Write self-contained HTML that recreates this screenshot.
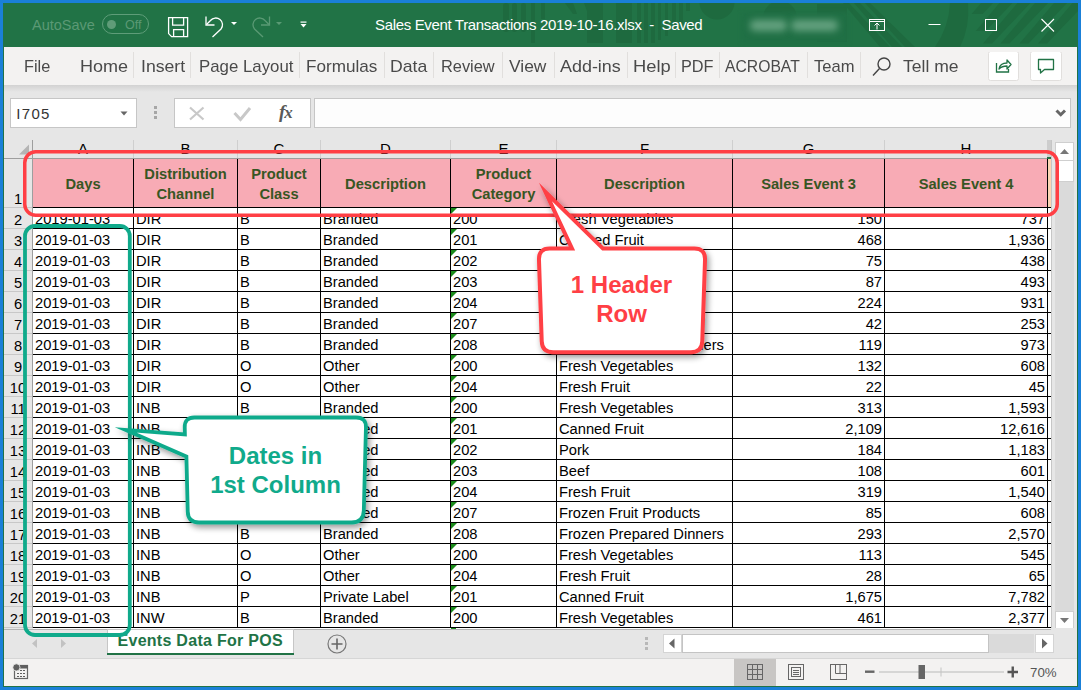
<!DOCTYPE html>
<html><head><meta charset="utf-8"><style>
*{margin:0;padding:0;box-sizing:border-box}
html,body{width:1081px;height:690px;overflow:hidden;background:#1a80d8;font-family:"Liberation Sans",sans-serif}
.a{position:absolute}
.t{position:absolute;white-space:pre;line-height:1}
.cell{position:absolute;white-space:pre;font-size:14.7px;line-height:1;color:#000}
</style></head><body>

<div class="a" style="left:3px;top:3px;width:1075px;height:684px;background:#217346"></div>
<svg class="a" style="left:3px;top:3px" width="1075" height="44" viewBox="3 3 1075 44">
<g fill="#1e6a3f">
<rect x="503" y="3" width="6" height="29" rx="3"/><rect x="512" y="3" width="5" height="29" rx="2.5"/>
<rect x="521" y="3" width="5" height="29" rx="2.5"/><rect x="531" y="3" width="4" height="40"/>
<rect x="541" y="3" width="4" height="16"/><path d="M565 3 h8 l4 11 h-4z"/>
<path d="M584 3 h19 v40 h-16 v-32z"/><rect x="616" y="3" width="16" height="40"/>
<rect x="637" y="3" width="4" height="40"/><rect x="644" y="3" width="4" height="40"/>
<rect x="651" y="3" width="4" height="40"/><rect x="658" y="3" width="3" height="37"/>
<rect x="665" y="3" width="3" height="33"/><rect x="672" y="3" width="4" height="26"/>
<rect x="679" y="3" width="4" height="20"/><rect x="686" y="3" width="4" height="8"/>
<circle cx="717" cy="2" r="17.5"/>
<circle cx="780" cy="18" r="17"/>
<rect x="817" y="4" width="30" height="38"/>
<path d="M843 3 h6 l41 44 h-10z M854 3 h6 l42 44 h-10z M865 3 h5 l45 44 h-10z"/>
<path d="M950 3 h18 q2 24 -8 44 h-25 q14 -20 15 -44z"/>
<path d="M981.0 3 H993.0 L982.6 14 H971.6Z M999.5 3 H1012.5 L985.8 31 H975.8Z M1017.5 3 H1030.5 L992.0 43.5 H983.0Z M1035.0 3 H1048.0 L1009.5 43.5 H1000.5Z M1054.0 3 H1067.0 L1028.5 43.5 H1019.5Z M1072.5 3 H1085.5 L1047.0 43.5 H1038.0Z"/>
</g>
</svg>
<div class="t" style="left:32px;top:17.5px;font-size:14.5px;color:#5b9975">AutoSave</div>
<div class="a" style="left:102px;top:14px;width:47px;height:20px;border:1px solid #5e9d79;border-radius:10px"></div>
<div class="a" style="left:107px;top:19.5px;width:9px;height:9px;border-radius:50%;background:#5f9c78"></div>
<div class="t" style="left:125px;top:19px;font-size:12.5px;color:#5b9975">Off</div>
<svg class="a" style="left:160px;top:10px" width="160" height="32" viewBox="160 10 160 32">
<g fill="none" stroke="#fff" stroke-width="1.3">
<path d="M168.6 17.6 h19 v19 h-16 l-3 -3z"/>
<path d="M172.6 17.6 v7.5 h11 v-7.5"/>
<path d="M173.6 36.6 v-7 h10 v7"/>
<path d="M206 16.5 v8.5 h8.5"/>
<path d="M206.5 24.5 l4 -4 a6.5 6.5 0 0 1 10.5 8.5 l-8.5 8"/>
</g>
<path d="M231 22 h6 l-3 3z" fill="#fff"/>
<g fill="none" stroke="#5a9a74" stroke-width="1.3">
<path d="M269.5 16.5 v8.5 h-8.5"/>
<path d="M269 24.5 l-4 -4 a6.5 6.5 0 0 0 -10.5 8.5 l8.5 8"/>
</g>
<path d="M276 22 h6 l-3 3z" fill="#5a9a74"/>
<rect x="300.5" y="21.5" width="6" height="1.2" fill="#fff"/>
<path d="M300.5 24 h6 l-3 3.5z" fill="#fff"/>
</svg>
<div class="t" style="left:375px;top:17px;font-size:15px;letter-spacing:-0.34px;color:#fff">Sales Event Transactions 2019-10-16.xlsx  -  Saved</div>
<div class="a" style="left:742px;top:12px;width:106px;height:31px;background:#207045;filter:blur(2px)"></div>
<div class="a" style="left:750px;top:20px;width:37px;height:11px;border-radius:5px;background:#64a17f;filter:blur(3.5px)"></div>
<div class="a" style="left:791px;top:20px;width:47px;height:11px;border-radius:5px;background:#64a17f;filter:blur(3.5px)"></div>
<svg class="a" style="left:860px;top:10px" width="210" height="30" viewBox="860 10 210 30">
<g fill="none" stroke="#fff" stroke-width="1">
<rect x="869.5" y="19.5" width="15" height="11"/>
<path d="M870 21.5 h14"/>
<path d="M877 29.5 v-6.5 M874.5 25.5 l2.5 -2.5 l2.5 2.5"/>
<path d="M928.5 24.5 h12"/>
<rect x="985.5" y="19.5" width="11" height="11"/>
<path d="M1041.5 19 l12.5 12.5 M1054 19 l-12.5 12.5" stroke-width="1.1"/>
</g></svg>
<div class="a" style="left:4px;top:47px;width:1073px;height:38px;background:#f3f2f1"></div>
<div class="t" style="left:24px;top:58px;font-size:17px;color:#4a4a4a;transform:scaleX(0.96);transform-origin:0 0">File</div>
<div class="t" style="left:79.5px;top:58px;font-size:17px;color:#4a4a4a;transform:scaleX(1.06);transform-origin:0 0">Home</div>
<div class="t" style="left:140.5px;top:58px;font-size:17px;color:#4a4a4a;transform:scaleX(1.038);transform-origin:0 0">Insert</div>
<div class="t" style="left:198.5px;top:58px;font-size:17px;color:#4a4a4a;transform:scaleX(0.989);transform-origin:0 0">Page Layout</div>
<div class="t" style="left:306px;top:58px;font-size:17px;color:#4a4a4a;transform:scaleX(1.007);transform-origin:0 0">Formulas</div>
<div class="t" style="left:390px;top:58px;font-size:17px;color:#4a4a4a;transform:scaleX(1.038);transform-origin:0 0">Data</div>
<div class="t" style="left:441px;top:58px;font-size:17px;color:#4a4a4a;transform:scaleX(0.963);transform-origin:0 0">Review</div>
<div class="t" style="left:509px;top:58px;font-size:17px;color:#4a4a4a;transform:scaleX(1.023);transform-origin:0 0">View</div>
<div class="t" style="left:560px;top:58px;font-size:17px;color:#4a4a4a;transform:scaleX(1.054);transform-origin:0 0">Add-ins</div>
<div class="t" style="left:632.5px;top:58px;font-size:17px;color:#4a4a4a;transform:scaleX(1.078);transform-origin:0 0">Help</div>
<div class="t" style="left:681.3px;top:58px;font-size:17px;color:#4a4a4a;transform:scaleX(0.958);transform-origin:0 0">PDF</div>
<div class="t" style="left:725.4px;top:58px;font-size:17px;color:#4a4a4a;transform:scaleX(0.924);transform-origin:0 0">ACROBAT</div>
<div class="t" style="left:813.6px;top:58px;font-size:17px;color:#4a4a4a;transform:scaleX(0.974);transform-origin:0 0">Team</div>
<div class="t" style="left:902.7px;top:58px;font-size:17px;color:#4a4a4a;transform:scaleX(1.031);transform-origin:0 0">Tell me</div>
<div class="a" style="left:133px;top:52px;width:1px;height:26px;background:#e1dfdd"></div>
<div class="a" style="left:190px;top:52px;width:1px;height:26px;background:#e1dfdd"></div>
<div class="a" style="left:299px;top:52px;width:1px;height:26px;background:#e1dfdd"></div>
<div class="a" style="left:384px;top:52px;width:1px;height:26px;background:#e1dfdd"></div>
<div class="a" style="left:433px;top:52px;width:1px;height:26px;background:#e1dfdd"></div>
<div class="a" style="left:502px;top:52px;width:1px;height:26px;background:#e1dfdd"></div>
<div class="a" style="left:554px;top:52px;width:1px;height:26px;background:#e1dfdd"></div>
<div class="a" style="left:627px;top:52px;width:1px;height:26px;background:#e1dfdd"></div>
<div class="a" style="left:675px;top:52px;width:1px;height:26px;background:#e1dfdd"></div>
<div class="a" style="left:719px;top:52px;width:1px;height:26px;background:#e1dfdd"></div>
<div class="a" style="left:807px;top:52px;width:1px;height:26px;background:#e1dfdd"></div>
<div class="a" style="left:860px;top:52px;width:1px;height:26px;background:#e1dfdd"></div>
<svg class="a" style="left:868px;top:52px" width="200" height="32" viewBox="868 52 200 32">
<g fill="none" stroke="#444" stroke-width="1.4"><circle cx="884" cy="64" r="6"/><path d="M879.5 68.5 l-6.5 7"/></g>
<rect x="988.5" y="51.5" width="30" height="29" rx="2" fill="#fff" stroke="#e1dfdd"/>
<rect x="1030.5" y="51.5" width="31" height="29" rx="2" fill="#fff" stroke="#e1dfdd"/>
<g fill="none" stroke="#217346" stroke-width="1.3">
<path d="M996.5 63 v9 h12 v-3"/><path d="M999 69 q1 -6 8 -6 v-3 l4 4.5 l-4 4.5 v-3 q-5 0 -8 3z" stroke-linejoin="round"/>
<path d="M1038.5 59.5 h15 v10 h-9 l-4 3.5 v-3.5 h-2z" stroke-linejoin="round"/>
</g></svg>
<div class="a" style="left:4px;top:85px;width:1073px;height:573px;background:#e6e6e6"></div>
<div class="a" style="left:4px;top:85px;width:1073px;height:7px;background:linear-gradient(#d2d2d2,#e6e6e6)"></div>
<div class="a" style="left:10px;top:98px;width:127px;height:30px;background:#fff;border:1px solid #c6c6c6"></div>
<div class="t" style="left:16.3px;top:105.5px;font-size:15px;letter-spacing:1.3px;color:#333">I705</div>
<svg class="a" style="left:110px;top:95px" width="210" height="35" viewBox="110 95 210 35">
<path d="M120.5 111.5 h7 l-3.5 4z" fill="#666"/>
<g fill="#a6a6a6"><rect x="154" y="106" width="3" height="3"/><rect x="154" y="111" width="3" height="3"/><rect x="154" y="116" width="3" height="3"/></g>
<rect x="174.5" y="98.5" width="136" height="29" fill="#fff" stroke="#c6c6c6"/>
<g fill="none" stroke="#c8c8c8" stroke-width="2.2"><path d="M190 107.5 l13.5 12 M203.5 107.5 l-13.5 12"/><path d="M234.5 113 l6 6.5 l9.5 -11.5" stroke-width="3"/></g>
</svg>
<div class="t" style="left:279px;top:102px;font-size:19px;font-family:'Liberation Serif',serif;font-style:italic;font-weight:bold;color:#595959">f<span style="font-size:17px;margin-left:-1px">x</span></div>
<div class="a" style="left:314px;top:98px;width:757px;height:30px;background:#fdfdfd;border:1px solid #c6c6c6"></div>
<svg class="a" style="left:1050px;top:105px" width="20" height="15" viewBox="1050 105 20 15"><path d="M1056.5 110.5 l4.25 4.25 l4.25 -4.25" fill="none" stroke="#666" stroke-width="3"/></svg>
<div class="a" style="left:4px;top:140px;width:1047px;height:18px;background:#e6e6e6"></div>
<div class="a" style="left:4px;top:158px;width:1047px;height:1px;background:#9e9e9e"></div>
<svg class="a" style="left:15px;top:142px" width="16" height="16" viewBox="15 142 16 16"><path d="M29 144.5 v10 h-10z" fill="#b4b4b4"/></svg>
<div class="a" style="left:32px;top:140px;width:1px;height:18px;background:#cfcfcf"></div>
<div class="a" style="left:133px;top:140px;width:1px;height:18px;background:#cfcfcf"></div>
<div class="a" style="left:237px;top:140px;width:1px;height:18px;background:#cfcfcf"></div>
<div class="a" style="left:320px;top:140px;width:1px;height:18px;background:#cfcfcf"></div>
<div class="a" style="left:450px;top:140px;width:1px;height:18px;background:#cfcfcf"></div>
<div class="a" style="left:556px;top:140px;width:1px;height:18px;background:#cfcfcf"></div>
<div class="a" style="left:732px;top:140px;width:1px;height:18px;background:#cfcfcf"></div>
<div class="a" style="left:884px;top:140px;width:1px;height:18px;background:#cfcfcf"></div>
<div class="a" style="left:1047px;top:140px;width:1px;height:18px;background:#cfcfcf"></div>
<div class="a" style="left:1047px;top:140px;width:4px;height:18px;background:#cdcdcd"></div>
<div class="t" style="left:33px;width:100px;top:141px;font-size:15px;text-align:center;color:#000">A</div>
<div class="t" style="left:134px;width:103px;top:141px;font-size:15px;text-align:center;color:#000">B</div>
<div class="t" style="left:238px;width:82px;top:141px;font-size:15px;text-align:center;color:#000">C</div>
<div class="t" style="left:321px;width:129px;top:141px;font-size:15px;text-align:center;color:#000">D</div>
<div class="t" style="left:451px;width:105px;top:141px;font-size:15px;text-align:center;color:#000">E</div>
<div class="t" style="left:557px;width:175px;top:141px;font-size:15px;text-align:center;color:#000">F</div>
<div class="t" style="left:733px;width:151px;top:141px;font-size:15px;text-align:center;color:#000">G</div>
<div class="t" style="left:885px;width:162px;top:141px;font-size:15px;text-align:center;color:#000">H</div>
<div class="a" style="left:4px;top:159px;width:28px;height:469px;background:#e6e6e6"></div>
<div class="a" style="left:32px;top:140px;width:1px;height:488px;background:#9e9e9e"></div>
<div class="a" style="left:4px;top:207px;width:28px;height:1px;background:#c8c8c8"></div>
<div class="t" style="left:4px;width:28px;top:191.5px;font-size:14.7px;text-align:center;color:#000">1</div>
<div class="a" style="left:4px;top:228px;width:28px;height:1px;background:#c8c8c8"></div>
<div class="t" style="left:4px;width:28px;top:212.5px;font-size:14.7px;text-align:center;color:#000">2</div>
<div class="a" style="left:4px;top:249px;width:28px;height:1px;background:#c8c8c8"></div>
<div class="t" style="left:4px;width:28px;top:233.5px;font-size:14.7px;text-align:center;color:#000">3</div>
<div class="a" style="left:4px;top:270px;width:28px;height:1px;background:#c8c8c8"></div>
<div class="t" style="left:4px;width:28px;top:254.5px;font-size:14.7px;text-align:center;color:#000">4</div>
<div class="a" style="left:4px;top:291px;width:28px;height:1px;background:#c8c8c8"></div>
<div class="t" style="left:4px;width:28px;top:275.5px;font-size:14.7px;text-align:center;color:#000">5</div>
<div class="a" style="left:4px;top:312px;width:28px;height:1px;background:#c8c8c8"></div>
<div class="t" style="left:4px;width:28px;top:296.5px;font-size:14.7px;text-align:center;color:#000">6</div>
<div class="a" style="left:4px;top:333px;width:28px;height:1px;background:#c8c8c8"></div>
<div class="t" style="left:4px;width:28px;top:317.5px;font-size:14.7px;text-align:center;color:#000">7</div>
<div class="a" style="left:4px;top:354px;width:28px;height:1px;background:#c8c8c8"></div>
<div class="t" style="left:4px;width:28px;top:338.5px;font-size:14.7px;text-align:center;color:#000">8</div>
<div class="a" style="left:4px;top:375px;width:28px;height:1px;background:#c8c8c8"></div>
<div class="t" style="left:4px;width:28px;top:359.5px;font-size:14.7px;text-align:center;color:#000">9</div>
<div class="a" style="left:4px;top:396px;width:28px;height:1px;background:#c8c8c8"></div>
<div class="t" style="left:4px;width:28px;top:380.5px;font-size:14.7px;text-align:center;color:#000">10</div>
<div class="a" style="left:4px;top:417px;width:28px;height:1px;background:#c8c8c8"></div>
<div class="t" style="left:4px;width:28px;top:401.5px;font-size:14.7px;text-align:center;color:#000">11</div>
<div class="a" style="left:4px;top:438px;width:28px;height:1px;background:#c8c8c8"></div>
<div class="t" style="left:4px;width:28px;top:422.5px;font-size:14.7px;text-align:center;color:#000">12</div>
<div class="a" style="left:4px;top:459px;width:28px;height:1px;background:#c8c8c8"></div>
<div class="t" style="left:4px;width:28px;top:443.5px;font-size:14.7px;text-align:center;color:#000">13</div>
<div class="a" style="left:4px;top:480px;width:28px;height:1px;background:#c8c8c8"></div>
<div class="t" style="left:4px;width:28px;top:464.5px;font-size:14.7px;text-align:center;color:#000">14</div>
<div class="a" style="left:4px;top:501px;width:28px;height:1px;background:#c8c8c8"></div>
<div class="t" style="left:4px;width:28px;top:485.5px;font-size:14.7px;text-align:center;color:#000">15</div>
<div class="a" style="left:4px;top:522px;width:28px;height:1px;background:#c8c8c8"></div>
<div class="t" style="left:4px;width:28px;top:506.5px;font-size:14.7px;text-align:center;color:#000">16</div>
<div class="a" style="left:4px;top:543px;width:28px;height:1px;background:#c8c8c8"></div>
<div class="t" style="left:4px;width:28px;top:527.5px;font-size:14.7px;text-align:center;color:#000">17</div>
<div class="a" style="left:4px;top:564px;width:28px;height:1px;background:#c8c8c8"></div>
<div class="t" style="left:4px;width:28px;top:548.5px;font-size:14.7px;text-align:center;color:#000">18</div>
<div class="a" style="left:4px;top:585px;width:28px;height:1px;background:#c8c8c8"></div>
<div class="t" style="left:4px;width:28px;top:569.5px;font-size:14.7px;text-align:center;color:#000">19</div>
<div class="a" style="left:4px;top:606px;width:28px;height:1px;background:#c8c8c8"></div>
<div class="t" style="left:4px;width:28px;top:590.5px;font-size:14.7px;text-align:center;color:#000">20</div>
<div class="a" style="left:4px;top:627px;width:28px;height:1px;background:#c8c8c8"></div>
<div class="t" style="left:4px;width:28px;top:611.5px;font-size:14.7px;text-align:center;color:#000">21</div>
<div class="a" style="left:33px;top:159px;width:1018px;height:469px;background:#fff"></div>
<div class="a" style="left:33px;top:159px;width:1014px;height:48px;background:#f8abb5"></div>
<div class="a" style="left:1048px;top:159px;width:3px;height:48px;background:#fcd5b4"></div>
<div class="a" style="left:1047px;top:157px;width:4px;height:2px;background:#217346"></div>
<div class="a" style="left:33px;top:207px;width:1018px;height:1px;background:#000"></div>
<div class="a" style="left:33px;top:228px;width:1018px;height:1px;background:#000"></div>
<div class="a" style="left:33px;top:249px;width:1018px;height:1px;background:#000"></div>
<div class="a" style="left:33px;top:270px;width:1018px;height:1px;background:#000"></div>
<div class="a" style="left:33px;top:291px;width:1018px;height:1px;background:#000"></div>
<div class="a" style="left:33px;top:312px;width:1018px;height:1px;background:#000"></div>
<div class="a" style="left:33px;top:333px;width:1018px;height:1px;background:#000"></div>
<div class="a" style="left:33px;top:354px;width:1018px;height:1px;background:#000"></div>
<div class="a" style="left:33px;top:375px;width:1018px;height:1px;background:#000"></div>
<div class="a" style="left:33px;top:396px;width:1018px;height:1px;background:#000"></div>
<div class="a" style="left:33px;top:417px;width:1018px;height:1px;background:#000"></div>
<div class="a" style="left:33px;top:438px;width:1018px;height:1px;background:#000"></div>
<div class="a" style="left:33px;top:459px;width:1018px;height:1px;background:#000"></div>
<div class="a" style="left:33px;top:480px;width:1018px;height:1px;background:#000"></div>
<div class="a" style="left:33px;top:501px;width:1018px;height:1px;background:#000"></div>
<div class="a" style="left:33px;top:522px;width:1018px;height:1px;background:#000"></div>
<div class="a" style="left:33px;top:543px;width:1018px;height:1px;background:#000"></div>
<div class="a" style="left:33px;top:564px;width:1018px;height:1px;background:#000"></div>
<div class="a" style="left:33px;top:585px;width:1018px;height:1px;background:#000"></div>
<div class="a" style="left:33px;top:606px;width:1018px;height:1px;background:#000"></div>
<div class="a" style="left:33px;top:627px;width:1018px;height:1px;background:#000"></div>
<div class="a" style="left:133px;top:159px;width:1px;height:469px;background:#000"></div>
<div class="a" style="left:237px;top:159px;width:1px;height:469px;background:#000"></div>
<div class="a" style="left:320px;top:159px;width:1px;height:469px;background:#000"></div>
<div class="a" style="left:450px;top:159px;width:1px;height:469px;background:#000"></div>
<div class="a" style="left:556px;top:159px;width:1px;height:469px;background:#000"></div>
<div class="a" style="left:732px;top:159px;width:1px;height:469px;background:#000"></div>
<div class="a" style="left:884px;top:159px;width:1px;height:469px;background:#000"></div>
<div class="a" style="left:1047px;top:159px;width:1px;height:469px;background:#000"></div>
<div class="t" style="left:33px;width:100px;top:177px;font-size:14.7px;line-height:20px;margin-top:-3px;font-weight:bold;text-align:center;color:#375623">Days</div>
<div class="t" style="left:134px;width:103px;top:167px;font-size:14.7px;line-height:20px;margin-top:-3px;font-weight:bold;text-align:center;color:#375623">Distribution<br>Channel</div>
<div class="t" style="left:238px;width:82px;top:167px;font-size:14.7px;line-height:20px;margin-top:-3px;font-weight:bold;text-align:center;color:#375623">Product<br>Class</div>
<div class="t" style="left:321px;width:129px;top:177px;font-size:14.7px;line-height:20px;margin-top:-3px;font-weight:bold;text-align:center;color:#375623">Description</div>
<div class="t" style="left:451px;width:105px;top:167px;font-size:14.7px;line-height:20px;margin-top:-3px;font-weight:bold;text-align:center;color:#375623">Product<br>Category</div>
<div class="t" style="left:557px;width:175px;top:177px;font-size:14.7px;line-height:20px;margin-top:-3px;font-weight:bold;text-align:center;color:#375623">Description</div>
<div class="t" style="left:733px;width:151px;top:177px;font-size:14.7px;line-height:20px;margin-top:-3px;font-weight:bold;text-align:center;color:#375623">Sales Event 3</div>
<div class="t" style="left:885px;width:162px;top:177px;font-size:14.7px;line-height:20px;margin-top:-3px;font-weight:bold;text-align:center;color:#375623">Sales Event 4</div>
<div class="cell" style="left:35px;top:212px">2019-01-03</div>
<div class="cell" style="left:136px;top:212px">DIR</div>
<div class="cell" style="left:240px;top:212px">B</div>
<div class="cell" style="left:323px;top:212px">Branded</div>
<div class="cell" style="left:453px;top:212px">200</div>
<div class="cell" style="left:559px;top:212px">Fresh Vegetables</div>
<div class="cell" style="right:199px;top:212px">150</div>
<div class="cell" style="right:36px;top:212px">737</div>
<svg class="a" style="left:451px;top:208px" width="6" height="6"><path d="M0 0 h6 l-6 6z" fill="#1a8a1a"/></svg>
<div class="cell" style="left:35px;top:233px">2019-01-03</div>
<div class="cell" style="left:136px;top:233px">DIR</div>
<div class="cell" style="left:240px;top:233px">B</div>
<div class="cell" style="left:323px;top:233px">Branded</div>
<div class="cell" style="left:453px;top:233px">201</div>
<div class="cell" style="left:559px;top:233px">Canned Fruit</div>
<div class="cell" style="right:199px;top:233px">468</div>
<div class="cell" style="right:36px;top:233px">1,936</div>
<svg class="a" style="left:451px;top:229px" width="6" height="6"><path d="M0 0 h6 l-6 6z" fill="#1a8a1a"/></svg>
<div class="cell" style="left:35px;top:254px">2019-01-03</div>
<div class="cell" style="left:136px;top:254px">DIR</div>
<div class="cell" style="left:240px;top:254px">B</div>
<div class="cell" style="left:323px;top:254px">Branded</div>
<div class="cell" style="left:453px;top:254px">202</div>
<div class="cell" style="left:559px;top:254px">Pork</div>
<div class="cell" style="right:199px;top:254px">75</div>
<div class="cell" style="right:36px;top:254px">438</div>
<svg class="a" style="left:451px;top:250px" width="6" height="6"><path d="M0 0 h6 l-6 6z" fill="#1a8a1a"/></svg>
<div class="cell" style="left:35px;top:275px">2019-01-03</div>
<div class="cell" style="left:136px;top:275px">DIR</div>
<div class="cell" style="left:240px;top:275px">B</div>
<div class="cell" style="left:323px;top:275px">Branded</div>
<div class="cell" style="left:453px;top:275px">203</div>
<div class="cell" style="left:559px;top:275px">Beef</div>
<div class="cell" style="right:199px;top:275px">87</div>
<div class="cell" style="right:36px;top:275px">493</div>
<svg class="a" style="left:451px;top:271px" width="6" height="6"><path d="M0 0 h6 l-6 6z" fill="#1a8a1a"/></svg>
<div class="cell" style="left:35px;top:296px">2019-01-03</div>
<div class="cell" style="left:136px;top:296px">DIR</div>
<div class="cell" style="left:240px;top:296px">B</div>
<div class="cell" style="left:323px;top:296px">Branded</div>
<div class="cell" style="left:453px;top:296px">204</div>
<div class="cell" style="left:559px;top:296px">Fresh Fruit</div>
<div class="cell" style="right:199px;top:296px">224</div>
<div class="cell" style="right:36px;top:296px">931</div>
<svg class="a" style="left:451px;top:292px" width="6" height="6"><path d="M0 0 h6 l-6 6z" fill="#1a8a1a"/></svg>
<div class="cell" style="left:35px;top:317px">2019-01-03</div>
<div class="cell" style="left:136px;top:317px">DIR</div>
<div class="cell" style="left:240px;top:317px">B</div>
<div class="cell" style="left:323px;top:317px">Branded</div>
<div class="cell" style="left:453px;top:317px">207</div>
<div class="cell" style="left:559px;top:317px">Frozen Fruit Products</div>
<div class="cell" style="right:199px;top:317px">42</div>
<div class="cell" style="right:36px;top:317px">253</div>
<svg class="a" style="left:451px;top:313px" width="6" height="6"><path d="M0 0 h6 l-6 6z" fill="#1a8a1a"/></svg>
<div class="cell" style="left:35px;top:338px">2019-01-03</div>
<div class="cell" style="left:136px;top:338px">DIR</div>
<div class="cell" style="left:240px;top:338px">B</div>
<div class="cell" style="left:323px;top:338px">Branded</div>
<div class="cell" style="left:453px;top:338px">208</div>
<div class="cell" style="left:559px;top:338px">Frozen Prepared Dinners</div>
<div class="cell" style="right:199px;top:338px">119</div>
<div class="cell" style="right:36px;top:338px">973</div>
<svg class="a" style="left:451px;top:334px" width="6" height="6"><path d="M0 0 h6 l-6 6z" fill="#1a8a1a"/></svg>
<div class="cell" style="left:35px;top:359px">2019-01-03</div>
<div class="cell" style="left:136px;top:359px">DIR</div>
<div class="cell" style="left:240px;top:359px">O</div>
<div class="cell" style="left:323px;top:359px">Other</div>
<div class="cell" style="left:453px;top:359px">200</div>
<div class="cell" style="left:559px;top:359px">Fresh Vegetables</div>
<div class="cell" style="right:199px;top:359px">132</div>
<div class="cell" style="right:36px;top:359px">608</div>
<svg class="a" style="left:451px;top:355px" width="6" height="6"><path d="M0 0 h6 l-6 6z" fill="#1a8a1a"/></svg>
<div class="cell" style="left:35px;top:380px">2019-01-03</div>
<div class="cell" style="left:136px;top:380px">DIR</div>
<div class="cell" style="left:240px;top:380px">O</div>
<div class="cell" style="left:323px;top:380px">Other</div>
<div class="cell" style="left:453px;top:380px">204</div>
<div class="cell" style="left:559px;top:380px">Fresh Fruit</div>
<div class="cell" style="right:199px;top:380px">22</div>
<div class="cell" style="right:36px;top:380px">45</div>
<svg class="a" style="left:451px;top:376px" width="6" height="6"><path d="M0 0 h6 l-6 6z" fill="#1a8a1a"/></svg>
<div class="cell" style="left:35px;top:401px">2019-01-03</div>
<div class="cell" style="left:136px;top:401px">INB</div>
<div class="cell" style="left:240px;top:401px">B</div>
<div class="cell" style="left:323px;top:401px">Branded</div>
<div class="cell" style="left:453px;top:401px">200</div>
<div class="cell" style="left:559px;top:401px">Fresh Vegetables</div>
<div class="cell" style="right:199px;top:401px">313</div>
<div class="cell" style="right:36px;top:401px">1,593</div>
<svg class="a" style="left:451px;top:397px" width="6" height="6"><path d="M0 0 h6 l-6 6z" fill="#1a8a1a"/></svg>
<div class="cell" style="left:35px;top:422px">2019-01-03</div>
<div class="cell" style="left:136px;top:422px">INB</div>
<div class="cell" style="left:240px;top:422px">B</div>
<div class="cell" style="left:323px;top:422px">Branded</div>
<div class="cell" style="left:453px;top:422px">201</div>
<div class="cell" style="left:559px;top:422px">Canned Fruit</div>
<div class="cell" style="right:199px;top:422px">2,109</div>
<div class="cell" style="right:36px;top:422px">12,616</div>
<svg class="a" style="left:451px;top:418px" width="6" height="6"><path d="M0 0 h6 l-6 6z" fill="#1a8a1a"/></svg>
<div class="cell" style="left:35px;top:443px">2019-01-03</div>
<div class="cell" style="left:136px;top:443px">INB</div>
<div class="cell" style="left:240px;top:443px">B</div>
<div class="cell" style="left:323px;top:443px">Branded</div>
<div class="cell" style="left:453px;top:443px">202</div>
<div class="cell" style="left:559px;top:443px">Pork</div>
<div class="cell" style="right:199px;top:443px">184</div>
<div class="cell" style="right:36px;top:443px">1,183</div>
<svg class="a" style="left:451px;top:439px" width="6" height="6"><path d="M0 0 h6 l-6 6z" fill="#1a8a1a"/></svg>
<div class="cell" style="left:35px;top:464px">2019-01-03</div>
<div class="cell" style="left:136px;top:464px">INB</div>
<div class="cell" style="left:240px;top:464px">B</div>
<div class="cell" style="left:323px;top:464px">Branded</div>
<div class="cell" style="left:453px;top:464px">203</div>
<div class="cell" style="left:559px;top:464px">Beef</div>
<div class="cell" style="right:199px;top:464px">108</div>
<div class="cell" style="right:36px;top:464px">601</div>
<svg class="a" style="left:451px;top:460px" width="6" height="6"><path d="M0 0 h6 l-6 6z" fill="#1a8a1a"/></svg>
<div class="cell" style="left:35px;top:485px">2019-01-03</div>
<div class="cell" style="left:136px;top:485px">INB</div>
<div class="cell" style="left:240px;top:485px">B</div>
<div class="cell" style="left:323px;top:485px">Branded</div>
<div class="cell" style="left:453px;top:485px">204</div>
<div class="cell" style="left:559px;top:485px">Fresh Fruit</div>
<div class="cell" style="right:199px;top:485px">319</div>
<div class="cell" style="right:36px;top:485px">1,540</div>
<svg class="a" style="left:451px;top:481px" width="6" height="6"><path d="M0 0 h6 l-6 6z" fill="#1a8a1a"/></svg>
<div class="cell" style="left:35px;top:506px">2019-01-03</div>
<div class="cell" style="left:136px;top:506px">INB</div>
<div class="cell" style="left:240px;top:506px">B</div>
<div class="cell" style="left:323px;top:506px">Branded</div>
<div class="cell" style="left:453px;top:506px">207</div>
<div class="cell" style="left:559px;top:506px">Frozen Fruit Products</div>
<div class="cell" style="right:199px;top:506px">85</div>
<div class="cell" style="right:36px;top:506px">608</div>
<svg class="a" style="left:451px;top:502px" width="6" height="6"><path d="M0 0 h6 l-6 6z" fill="#1a8a1a"/></svg>
<div class="cell" style="left:35px;top:527px">2019-01-03</div>
<div class="cell" style="left:136px;top:527px">INB</div>
<div class="cell" style="left:240px;top:527px">B</div>
<div class="cell" style="left:323px;top:527px">Branded</div>
<div class="cell" style="left:453px;top:527px">208</div>
<div class="cell" style="left:559px;top:527px">Frozen Prepared Dinners</div>
<div class="cell" style="right:199px;top:527px">293</div>
<div class="cell" style="right:36px;top:527px">2,570</div>
<svg class="a" style="left:451px;top:523px" width="6" height="6"><path d="M0 0 h6 l-6 6z" fill="#1a8a1a"/></svg>
<div class="cell" style="left:35px;top:548px">2019-01-03</div>
<div class="cell" style="left:136px;top:548px">INB</div>
<div class="cell" style="left:240px;top:548px">O</div>
<div class="cell" style="left:323px;top:548px">Other</div>
<div class="cell" style="left:453px;top:548px">200</div>
<div class="cell" style="left:559px;top:548px">Fresh Vegetables</div>
<div class="cell" style="right:199px;top:548px">113</div>
<div class="cell" style="right:36px;top:548px">545</div>
<svg class="a" style="left:451px;top:544px" width="6" height="6"><path d="M0 0 h6 l-6 6z" fill="#1a8a1a"/></svg>
<div class="cell" style="left:35px;top:569px">2019-01-03</div>
<div class="cell" style="left:136px;top:569px">INB</div>
<div class="cell" style="left:240px;top:569px">O</div>
<div class="cell" style="left:323px;top:569px">Other</div>
<div class="cell" style="left:453px;top:569px">204</div>
<div class="cell" style="left:559px;top:569px">Fresh Fruit</div>
<div class="cell" style="right:199px;top:569px">28</div>
<div class="cell" style="right:36px;top:569px">65</div>
<svg class="a" style="left:451px;top:565px" width="6" height="6"><path d="M0 0 h6 l-6 6z" fill="#1a8a1a"/></svg>
<div class="cell" style="left:35px;top:590px">2019-01-03</div>
<div class="cell" style="left:136px;top:590px">INB</div>
<div class="cell" style="left:240px;top:590px">P</div>
<div class="cell" style="left:323px;top:590px">Private Label</div>
<div class="cell" style="left:453px;top:590px">201</div>
<div class="cell" style="left:559px;top:590px">Canned Fruit</div>
<div class="cell" style="right:199px;top:590px">1,675</div>
<div class="cell" style="right:36px;top:590px">7,782</div>
<svg class="a" style="left:451px;top:586px" width="6" height="6"><path d="M0 0 h6 l-6 6z" fill="#1a8a1a"/></svg>
<div class="cell" style="left:35px;top:611px">2019-01-03</div>
<div class="cell" style="left:136px;top:611px">INW</div>
<div class="cell" style="left:240px;top:611px">B</div>
<div class="cell" style="left:323px;top:611px">Branded</div>
<div class="cell" style="left:453px;top:611px">200</div>
<div class="cell" style="left:559px;top:611px">Fresh Vegetables</div>
<div class="cell" style="right:199px;top:611px">461</div>
<div class="cell" style="right:36px;top:611px">2,377</div>
<svg class="a" style="left:451px;top:607px" width="6" height="6"><path d="M0 0 h6 l-6 6z" fill="#1a8a1a"/></svg>
<div class="a" style="left:1051px;top:140px;width:1px;height:488px;background:#c6c6c6"></div>
<div class="a" style="left:1052px;top:140px;width:25px;height:488px;background:#e6e6e6"></div>
<div class="a" style="left:1055px;top:142px;width:19px;height:19px;background:#fff;border:1px solid #cfcfcf"></div>
<div class="a" style="left:1055px;top:160px;width:19px;height:22px;background:#fff;border:1px solid #cfcfcf"></div>
<div class="a" style="left:1055px;top:182px;width:19px;height:429px;background:#dadada"></div>
<div class="a" style="left:1055px;top:611px;width:19px;height:19px;background:#fff;border:1px solid #cfcfcf"></div>
<svg class="a" style="left:1055px;top:140px" width="20" height="490" viewBox="1055 140 20 490"><path d="M1060 154 h9 l-4.5 -5z" fill="#777"/><path d="M1060 618 h9 l-4.5 5z" fill="#777"/></svg>
<div class="a" style="left:4px;top:628px;width:1073px;height:30px;background:#e6e6e6"></div>
<div class="a" style="left:33px;top:628px;width:1018px;height:1px;background:#fff"></div>
<div class="a" style="left:451px;top:628px;width:5px;height:1px;background:#1a8a1a"></div>
<div class="a" style="left:4px;top:629px;width:1047px;height:1px;background:#b4b4b4"></div>
<svg class="a" style="left:25px;top:635px" width="50" height="18" viewBox="25 635 50 18"><path d="M37 639 v9 l-5 -4.5z" fill="#c2c2c2"/><path d="M61 639 v9 l5 -4.5z" fill="#c2c2c2"/></svg>
<div class="a" style="left:107px;top:629px;width:187px;height:26px;background:#fff;border-left:1px solid #c6c6c6;border-right:1px solid #c6c6c6;border-top:1px solid #c6c6c6"></div>
<div class="a" style="left:107px;top:653px;width:187px;height:2px;background:#217346"></div>
<div class="t" style="left:117.5px;top:633px;font-size:16px;font-weight:bold;color:#217346;letter-spacing:0.28px">Events Data For POS</div>
<svg class="a" style="left:325px;top:632px" width="24" height="24" viewBox="325 632 24 24"><circle cx="337" cy="644" r="9" fill="none" stroke="#777" stroke-width="1.2"/><path d="M337 638.5 v11 M331.5 644 h11" stroke="#666" stroke-width="1.6"/></svg>
<svg class="a" style="left:640px;top:631px" width="20" height="24"><g fill="#b8b8b8"><rect x="5" y="6" width="3" height="3"/><rect x="5" y="11" width="3" height="3"/><rect x="5" y="16" width="3" height="3"/></g></svg>
<div class="a" style="left:663px;top:634px;width:414px;height:19px;background:#e6e6e6"></div>
<div class="a" style="left:989px;top:634px;width:45px;height:19px;background:#dadada"></div>
<div class="a" style="left:663px;top:634px;width:19px;height:19px;background:#fff;border:1px solid #d4d4d4"></div>
<div class="a" style="left:682px;top:634px;width:307px;height:19px;background:#fff;border:1px solid #c4c4c4"></div>
<div class="a" style="left:1035px;top:634px;width:19px;height:19px;background:#fff;border:1px solid #d4d4d4"></div>
<svg class="a" style="left:660px;top:634px" width="400" height="20" viewBox="660 634 400 20"><path d="M674.5 638.5 v10 l-5.5 -5z" fill="#666"/><path d="M1042 638.5 v10 l5.5 -5z" fill="#666"/></svg>
<div class="a" style="left:4px;top:658px;width:1073px;height:28px;background:#f3f2f1"></div>
<div class="a" style="left:4px;top:658px;width:1073px;height:1px;background:#d6d6d6"></div>
<div class="a" style="left:734px;top:659px;width:42px;height:27px;background:#c8c6c4"></div>
<svg class="a" style="left:10px;top:660px" width="1070" height="26" viewBox="10 660 1070 26">
<g fill="none" stroke="#666" stroke-width="1">
<rect x="14.5" y="665.5" width="13" height="13" stroke-width="1.2"/>
</g><rect x="14" y="665" width="14" height="3.5" fill="#5f5f5f"/><circle cx="16.4" cy="667.4" r="3.6" fill="#5f5f5f" stroke="#f3f2f1" stroke-width="0.8"/>
<g fill="#5f5f5f"><rect x="20" y="670" width="2" height="1"/><rect x="23" y="670" width="2" height="1"/><rect x="17" y="673" width="2" height="1"/><rect x="20" y="673" width="2" height="1"/><rect x="23" y="673" width="2" height="1"/><rect x="17" y="676" width="2" height="1"/><rect x="20" y="676" width="2" height="1"/><rect x="23" y="676" width="2" height="1"/></g>
<g fill="none" stroke="#666" stroke-width="1">
<rect x="747.5" y="664.5" width="15" height="15"/><path d="M748 669.5 h14 M748 674.5 h14 M752.5 665 v14 M757.5 665 v14"/>
<rect x="788.5" y="664.5" width="15" height="15"/><rect x="791.5" y="667.5" width="9" height="9"/><path d="M793 670.5 h6 M793 672.5 h6 M793 674.5 h6"/>
<rect x="830.5" y="664.5" width="16" height="15"/><path d="M835.5 665 v8.5 h11 M840 665 v8.5"/>
</g>
<rect x="865" y="670.5" width="9.5" height="2.4" fill="#666"/>
<rect x="879" y="671.5" width="125" height="1" fill="#b9b9b9"/>
<rect x="940.5" y="667.5" width="1" height="9" fill="#c4c4c4"/>
<rect x="918.5" y="665" width="6.5" height="14" fill="#666"/>
<path d="M1007.5 672 h10.5 M1012.75 666.5 v11" stroke="#555" stroke-width="2.4"/>
</svg>
<div class="t" style="left:1030px;top:666px;font-size:13.3px;color:#555">70%</div>
<svg class="a" style="left:0;top:0" width="1081" height="690" viewBox="0 0 1081 690">
<defs>
<filter id="sh" x="-20%" y="-20%" width="140%" height="140%"><feGaussianBlur in="SourceAlpha" stdDeviation="3"/><feOffset dx="1.5" dy="3"/><feComponentTransfer><feFuncA type="linear" slope="0.42"/></feComponentTransfer><feMerge><feMergeNode/><feMergeNode in="SourceGraphic"/></feMerge></filter>
</defs>
<rect x="24.75" y="151.75" width="1032.5" height="63.5" rx="11" fill="none" stroke="#ff3f45" stroke-width="3.5"/>
<rect x="25" y="226" width="104.8" height="409" rx="10" fill="none" stroke="#10aa8b" stroke-width="3.8"/>
<path filter="url(#sh)" d="M538.97 259.59 Q538.60 248.60 549.60 248.60 L572.00 248.60 L545.50 192.00 L603.00 248.60 L694.40 248.60 Q705.40 248.60 705.03 259.59 L702.27 341.21 Q701.90 352.20 690.90 352.20 L553.10 352.20 Q542.10 352.20 541.73 341.21Z" fill="#fff" stroke="#ff3f45" stroke-width="4" stroke-linejoin="miter" stroke-miterlimit="20"/>
<path filter="url(#sh)" d="M184.74 427.50 Q184.50 417.50 194.50 417.50 L356.20 417.50 Q366.20 417.50 365.94 427.50 L363.81 510.50 Q363.50 522.50 351.50 522.50 L199.00 522.50 Q188.00 522.50 187.73 511.50 L186.40 456.50 L125.80 429.90 L184.90 434.50Z" fill="#fff" stroke="#10aa8b" stroke-width="3.8" stroke-linejoin="miter" stroke-miterlimit="20"/>
</svg>
<div class="t" style="left:538.5px;width:166px;top:270px;font-size:24px;line-height:29px;font-weight:bold;text-align:center;color:#ff3f45">1 Header<br>Row</div>
<div class="t" style="left:185px;width:181px;top:441px;font-size:24px;line-height:29px;font-weight:bold;text-align:center;color:#10aa8b">Dates in<br>1st Column</div>
</body></html>
